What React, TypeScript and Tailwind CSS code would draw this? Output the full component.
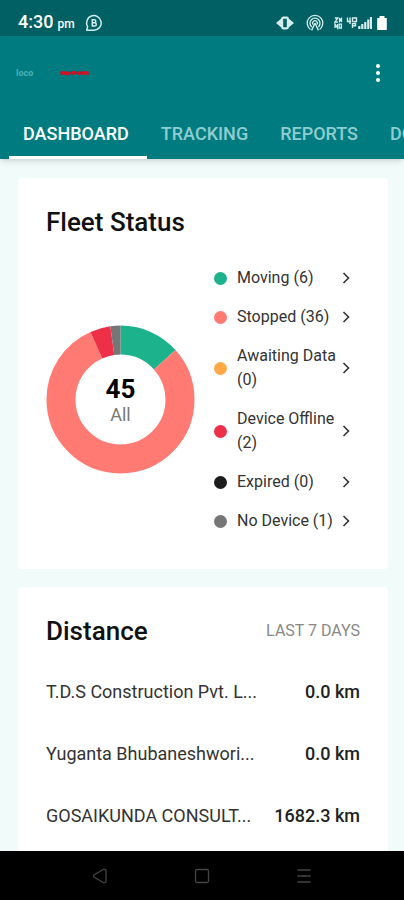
import type { ReactNode } from 'react';

interface Status {
  label: string;
  count: number;
  color: string;
}

const STATUSES: Status[] = [
  { label: 'Moving', count: 6, color: '#1bb28c' },
  { label: 'Stopped', count: 36, color: '#ff7a73' },
  { label: 'Awaiting Data', count: 0, color: '#ffaa47' },
  { label: 'Device Offline', count: 2, color: '#ed3048' },
  { label: 'Expired', count: 0, color: '#1c1c1c' },
  { label: 'No Device', count: 1, color: '#767676' },
];

const DISTANCES = [
  { name: 'T.D.S Construction Pvt. L...', km: '0.0 km' },
  { name: 'Yuganta Bhubaneshwori...', km: '0.0 km' },
  { name: 'GOSAIKUNDA CONSULT...', km: '1682.3 km' },
];

const TABS = ['DASHBOARD', 'TRACKING', 'REPORTS', 'DOCUMENTS'];

function StatusBar() {
  return (
    <div className="flex h-9 shrink-0 items-center bg-[#006064] pt-[10px] pr-4 pl-[18px] text-[#d5ecec]">
      <div className="flex items-baseline gap-1 font-medium text-white">
        <span className="text-lg leading-6">4:30</span>
        <span className="text-xs leading-6">pm</span>
      </div>
      <svg className="ml-[10px] size-[18px]" viewBox="0 0 18 18" fill="none" stroke="currentColor" strokeWidth="1.5">
        <path d="M1.8 16.2 2.6 12.6A7.3 7.3 0 1 1 9 16.2Z" strokeLinejoin="round" />
        <path d="M7.3 5.8h2a1.5 1.5 0 0 1 0 3H7.3zM7.3 8.8h2.4a1.6 1.6 0 0 1 0 3.2H7.3z" />
      </svg>
      <div className="ml-auto flex items-center">
        <svg className="h-[14px] w-[18px]" viewBox="0 0 18 14">
          <path d="M0 7 5 2.8v8.4zM18 7l-5-4.2v8.4z" fill="currentColor" />
          <rect x="6.1" y="1.7" width="5.8" height="10.6" rx="1.2" fill="#006064" stroke="currentColor" strokeWidth="2.2" />
        </svg>
        <svg className="ml-3 size-[18px]" viewBox="0 0 18 18" fill="none" stroke="currentColor" strokeWidth="1.3">
          <path d="M4.4 15.4a7.8 7.8 0 1 1 9.2 0" />
          <path d="M5.7 12.9a5 5 0 1 1 6.6 0" />
          <path d="M7.3 10.6a2.3 2.3 0 1 1 3.4 0" />
          <path d="M9 9.2 5.6 16.4M9 9.2l3.4 7.2" />
        </svg>
        <svg className="ml-[10px] h-[14px] w-[38px]" viewBox="0 0 38 14" fill="none" stroke="currentColor">
          <path d="M.8 2h3L.9 6h3M5.5 6.5V2l2 4V1.5M1 12V8l2.5 4V8M5.2 12V8.2h2.2v3.8z" strokeWidth="1.3" />
          <path d="M13.5 1.5v4h3.5M16 1.5v6.5M18.5 6V2h4v3.5h-3M18.5 12V7.5h3v2.2h-3" strokeWidth="1.4" />
          <path d="M25.3 13v-3M28.3 13V8M31.3 13V6M34.3 13V3.5M37 13V1" strokeWidth="2.2" />
        </svg>
        <svg className="ml-1 h-[14px] w-3" viewBox="0 0 12 14" fill="white">
          <path d="M3.5 0h5v2h2.3v12H1.2V2h2.3z" />
        </svg>
      </div>
    </div>
  );
}

function AppBar() {
  return (
    <header className="z-10 shrink-0 bg-[#007b7f] shadow-md">
      <div className="flex h-[73px] items-center px-4">
        <span className="text-[9px] leading-3 font-bold text-[#4fb0b4]">loco</span>
        <svg className="ml-[26px] h-2 w-8" viewBox="0 0 32 8" aria-hidden="true">
          <path d="M1.5 4h28" stroke="#8e2435" strokeWidth="2.5" />
          <path d="M1.5 4h4.5M7 4.5h4M12 3.8h5M18.5 4.3h3M23 4h6.5" stroke="#cf1226" strokeWidth="3.5" />
        </svg>
        <button type="button" aria-label="More options" className="ml-auto flex h-10 w-5 items-center justify-center">
          <svg className="h-5 w-1" viewBox="0 0 4 20" fill="white">
            <circle cx="2" cy="3" r="2" />
            <circle cx="2" cy="10" r="2" />
            <circle cx="2" cy="17" r="2" />
          </svg>
        </button>
      </div>
      <nav className="flex overflow-x-auto pl-[9px] [scrollbar-width:none]">
        {TABS.map((t, i) => (
          <button
            key={t}
            type="button"
            className={
              i === 0
                ? 'h-[50px] shrink-0 border-b-[3px] border-white pt-[3px] pr-[18px] pl-[14px] text-lg leading-6 font-medium text-white'
                : 'h-[50px] shrink-0 border-b-[3px] border-transparent pt-[3px] pr-[18px] pl-[14px] text-lg leading-6 font-medium text-[#8fcdd0]'
            }
          >
            {t}
          </button>
        ))}
      </nav>
    </header>
  );
}

function Card({ children }: { children: ReactNode }) {
  return <section className="rounded-sm bg-white px-7 pt-7 pb-9">{children}</section>;
}

// Ring chart, segments run clockwise from 12 o'clock
function StatusChart() {
  const total = STATUSES.reduce((s, x) => s + x.count, 0);
  let start = 0;

  return (
    <svg className="w-[149px] shrink-0" viewBox="0 0 149 149">
      <g transform="rotate(-90 74.5 74.5)" fill="none" strokeWidth="29">
        {STATUSES.filter(s => s.count > 0).map(s => {
          const offset = start;
          start += s.count;
          return (
            <circle
              key={s.label}
              cx="74.5"
              cy="74.5"
              r="59.5"
              stroke={s.color}
              pathLength={total}
              strokeDasharray={`${s.count} ${total - s.count}`}
              strokeDashoffset={-offset}
            />
          );
        })}
      </g>
      <text x="74.5" y="73" textAnchor="middle" className="fill-black text-[26px] font-bold">{total}</text>
      <text x="74.5" y="96" textAnchor="middle" className="fill-[#777777] text-lg">All</text>
    </svg>
  );
}

function FleetStatus() {
  return (
    <Card>
      <h2 className="text-[26px] leading-8 font-medium text-[#111111]">Fleet Status</h2>
      <div className="flex items-center pt-7">
        <StatusChart />
        <ul className="ml-[19px] flex min-w-0 flex-1 flex-col gap-[15px]">
          {STATUSES.map(s => (
            <li key={s.label}>
              <button type="button" className="flex w-full items-center text-left">
                <span className="size-[13px] shrink-0 rounded-full" style={{ backgroundColor: s.color }} />
                <span className="ml-[10px] w-[100px] text-base leading-6 text-[#333333]">
                  {s.label} ({s.count})
                </span>
                <svg className="ml-[3px] h-3 w-3 shrink-0" viewBox="0 0 12 12" fill="none" stroke="#333333" strokeWidth="1.6">
                  <path d="m3.5 1 5 5-5 5" />
                </svg>
              </button>
            </li>
          ))}
        </ul>
      </div>
    </Card>
  );
}

function Distance() {
  return (
    <Card>
      <div className="flex items-center justify-between pb-[14px]">
        <h2 className="text-[26px] leading-8 font-medium text-[#111111]">Distance</h2>
        <span className="text-base leading-6 text-[#888888]">LAST 7 DAYS</span>
      </div>
      <table className="w-full text-lg leading-6">
        <tbody>
          {DISTANCES.map(d => (
            <tr key={d.name} className="h-[62px]">
              <td className="whitespace-nowrap text-[#333333]">{d.name}</td>
              <td className="text-right font-medium whitespace-nowrap text-[#222222]">{d.km}</td>
            </tr>
          ))}
        </tbody>
      </table>
    </Card>
  );
}

function NavBar() {
  return (
    <div className="flex h-[49px] shrink-0 items-center justify-center gap-[78px] bg-black text-[#444444]">
      <button type="button" aria-label="Back" className="flex size-6 items-center justify-center">
        <svg className="size-4" viewBox="0 0 16 16" fill="none" stroke="currentColor" strokeWidth="1.3" strokeLinejoin="round">
          <path d="M1.5 8.8v-1.6L11.5 1.2Q14 .8 14 3v10q0 2.2-2.5 1.8z" />
        </svg>
      </button>
      <button type="button" aria-label="Home" className="flex size-6 items-center justify-center">
        <svg className="size-4" viewBox="0 0 16 16" fill="none" stroke="currentColor" strokeWidth="1.3">
          <rect x="1.5" y="1.5" width="13" height="13" rx="1.5" />
        </svg>
      </button>
      <button type="button" aria-label="Recents" className="flex size-6 items-center justify-center">
        <svg className="size-4" viewBox="0 0 16 16" fill="none" stroke="currentColor" strokeWidth="1.3">
          <path d="M1.5 2h13M1.5 8h13M1.5 14h13" />
        </svg>
      </button>
    </div>
  );
}

export default function App() {
  return (
    <div className="flex h-screen flex-col overflow-hidden bg-[#f1fbfa] font-['Roboto',sans-serif]">
      <StatusBar />
      <AppBar />
      <main className="flex min-h-0 flex-1 flex-col gap-[18px] overflow-y-auto pt-[19px] pr-4 pl-[18px] [scrollbar-width:none]">
        <FleetStatus />
        <Distance />
      </main>
      <NavBar />
    </div>
  );
}
